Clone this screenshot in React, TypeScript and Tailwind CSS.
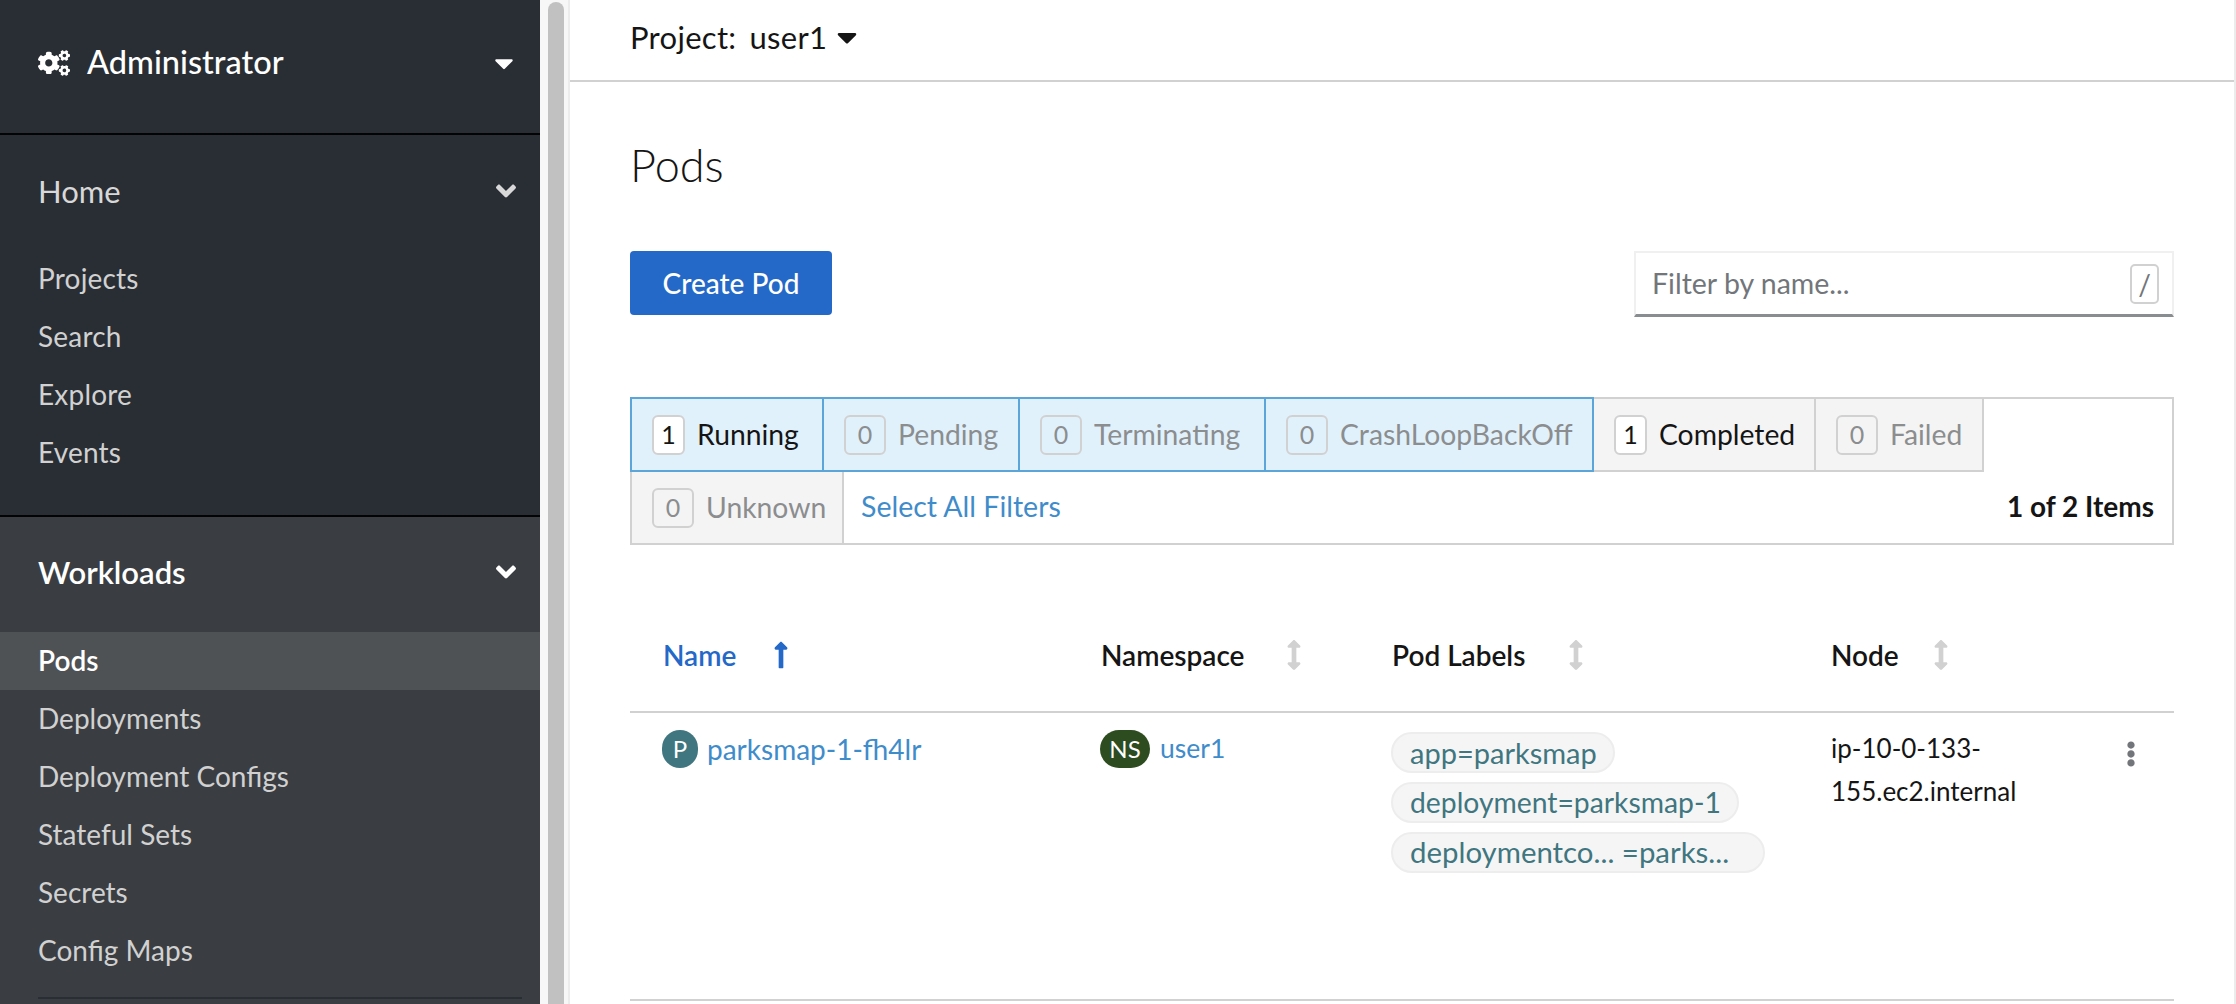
import { FaCogs, FaCaretDown, FaAngleDown, FaLongArrowAltUp, FaArrowsAltV, FaEllipsisV } from "react-icons/fa";

const homeLinks = ["Projects", "Search", "Explore", "Events"];
const workloadLinks = ["Pods", "Deployments", "Deployment Configs", "Stateful Sets", "Secrets", "Config Maps"];

function Filter({ count, label, width, active, on }: { count: number; label: string; width: string; active?: boolean; on?: boolean }) {
  return (
    <div className={`flex h-full items-center pl-[20px] ${width} ${active ? "bg-[#e0f1fb]" : "bg-[#f4f4f4]"}`}>
      <span
        className={`flex h-[40px] items-center justify-center rounded-[6px] border-2 border-[#d1d1d1] text-[25px] ${
          on ? "w-[33px] bg-white text-[#151515]" : "w-[42px] text-[#8b8d8f]"
        }`}
      >
        {count}
      </span>
      <span className={`ml-[12px] whitespace-nowrap text-[28.3px] ${on ? "text-[#151515]" : "text-[#8b8d8f]"}`}>{label}</span>
    </div>
  );
}

function Pill({ text, size }: { text: string; size: string }) {
  return (
    <span className={`flex h-[41px] w-fit items-center rounded-full border-2 border-[#ededed] bg-[#f5f5f5] pl-[17px] text-[#3f7680] ${size}`}>
      {text}
    </span>
  );
}

function App() {
  return (
    <div className="flex h-screen overflow-hidden bg-white font-['Lato',sans-serif]">
      <aside className="w-[540px] shrink-0 bg-[#3a3e42]">
        <div className="flex h-[135px] items-center border-b-2 border-[#030303] bg-[#292e34] pb-[8px] pl-[38px] pr-[21px] text-white">
          <FaCogs size={32} />
          <span className="ml-[17px] text-[32.5px] font-medium">Administrator</span>
          <FaCaretDown size={30} className="ml-auto" />
        </div>
        <div className="h-[382px] border-b-2 border-[#030303] bg-[#292e34]">
          <div className="flex h-[112px] items-center pl-[38px] pr-[18px] text-[31px] text-[#d8d8d8]">
            Home
            <FaAngleDown size={32} className="ml-auto" />
          </div>
          <div className="pt-[2px]">
            {homeLinks.map((item) => (
              <div key={item} className="flex h-[58px] items-center pl-[38px] text-[28px] tracking-[0.2px] text-[#d1d1d1]">
                {item}
              </div>
            ))}
          </div>
        </div>
        <div className="flex h-[112px] items-center pb-[2px] pl-[38px] pr-[18px] text-[31px] font-semibold text-white">
          Workloads
          <FaAngleDown size={32} className="ml-auto" />
        </div>
        <div className="pt-[3px]">
          {workloadLinks.map((item) => (
            <div
              key={item}
              className={`flex h-[58px] items-center pb-[2px] pl-[38px] text-[28px] ${
                item === "Pods" ? "bg-[#4f5255] font-semibold text-white" : "text-[#d1d1d1]"
              }`}
            >
              {item}
            </div>
          ))}
        </div>
        <div className="ml-[38px] mr-[18px] mt-[17px] h-[2px] bg-[#292e34]" />
      </aside>

      <div className="w-[30px] shrink-0 border-r-2 border-[#ececec] bg-[#f7f7f7] pl-[8px] pt-[2px]">
        <div className="h-[1100px] w-[16px] rounded-full bg-[#c1c1c1]" />
      </div>

      <main className="min-w-0 flex-1 border-r-2 border-[#ececec] text-[#151515]">
        <div className="flex h-[82px] items-center border-b-2 border-[#d1d1d1] pb-[6px] pl-[60px] text-[31px] tracking-[0.3px]">
          <span>Project:</span>
          <span className="ml-[13px]">user1</span>
          <FaCaretDown size={32} className="ml-[4px]" />
        </div>

        <div className="pl-[60px] pr-[60px]">
          <h1 className="flex h-[169px] items-center pb-[2px] text-[45px] font-light">Pods</h1>

          <div className="flex h-[65px] items-start justify-between">
            <button className="h-[64px] w-[202px] rounded-[4px] bg-[#2468c8] text-[28px] font-medium text-white">
              Create Pod
            </button>
            <div className="flex h-[66px] w-[540px] items-center border-2 border-b-[3px] border-[#f0f0f0] border-b-[#8a8d90] pl-[16px] pr-[13px]">
              <span className="text-[28.5px] text-[#72767b]">Filter by name...</span>
              <span className="ml-auto flex h-[40px] w-[29px] items-center justify-center rounded-[5px] border-2 border-[#d1d1d1] text-[28px] text-[#72767b]">
                /
              </span>
            </div>
          </div>

          <div className="mt-[81px] h-[148px] border-2 border-[#d1d1d1]">
            <div className="flex h-[72px]">
              <div className="-ml-[2px] -mt-[2px] flex h-[75px] border-2 border-[#5ba5d8]">
                <div className="border-r-2 border-[#5ba5d8]">
                  <Filter count={1} label="Running" width="w-[190px]" active on />
                </div>
                <div className="border-r-2 border-[#5ba5d8]">
                  <Filter count={0} label="Pending" width="w-[194px]" active />
                </div>
                <div className="border-r-2 border-[#5ba5d8]">
                  <Filter count={0} label="Terminating" width="w-[244px]" active />
                </div>
                <Filter count={0} label="CrashLoopBackOff" width="w-[326px]" active />
              </div>
              <div className="h-[73px] border-b-2 border-r-2 border-[#d1d1d1]">
                <Filter count={1} label="Completed" width="w-[220px]" on />
              </div>
              <div className="h-[73px] border-b-2 border-r-2 border-[#d1d1d1]">
                <Filter count={0} label="Failed" width="w-[166px]" />
              </div>
            </div>
            <div className="mt-[1px] flex h-[71px] items-center">
              <div className="h-full border-r-2 border-[#d1d1d1]">
                <Filter count={0} label="Unknown" width="w-[210px]" />
              </div>
              <span className="mb-[2px] ml-[17px] text-[28.5px] text-[#3f8ccb]">Select All Filters</span>
              <span className="mb-[4px] ml-auto mr-[18px] text-[28px] font-bold">1 of 2 Items</span>
            </div>
          </div>

          <div className="mt-[56px] grid h-[112px] grid-cols-[438px_291px_439px_1fr] items-center border-b-2 border-[#d1d1d1] pb-[2px] pl-[33px] text-[28px] font-semibold">
            <div className="flex items-center text-[#2468c8]">
              <span className="w-[103px]">Name</span>
              <FaLongArrowAltUp size={30} />
            </div>
            <div className="flex items-center">
              <span className="w-[178px]">Namespace</span>
              <FaArrowsAltV size={30} className="text-[#d1d1d1]" />
            </div>
            <div className="flex items-center">
              <span className="w-[169px]">Pod Labels</span>
              <FaArrowsAltV size={30} className="text-[#d1d1d1]" />
            </div>
            <div className="flex items-center">
              <span className="w-[95px]">Node</span>
              <FaArrowsAltV size={30} className="text-[#d1d1d1]" />
            </div>
          </div>

          <div className="grid h-[288px] grid-cols-[438px_291px_439px_1fr] border-b-2 border-[#d1d1d1] pl-[32px] pt-[17px]">
            <div className="flex h-[38px] items-center">
              <span className="flex h-[38px] w-[36px] items-center justify-center rounded-full bg-[#3f7680] text-[24px] text-white">
                P
              </span>
              <span className="ml-[9px] text-[28px] text-[#3f8ccb]">parksmap-1-fh4lr</span>
            </div>
            <div className="flex h-[38px] items-center">
              <span className="flex h-[38px] w-[50px] items-center justify-center rounded-full bg-[#2d4c1f] text-[24px] text-white">
                NS
              </span>
              <span className="ml-[10px] text-[26.5px] text-[#3f8ccb]">user1</span>
            </div>
            <div className="flex flex-col gap-[9px] pt-[2px]">
              <Pill text="app=parksmap" size="pr-[16px] text-[29px]" />
              <Pill text="deployment=parksmap-1" size="pr-[16px] text-[28.3px]" />
              <Pill text="deploymentco... =parks..." size="pr-[34px] text-[29.4px]" />
            </div>
            <div className="flex">
              <div className="-mt-[3px] w-[288px] pl-[1px] text-[26px] leading-[43px]">
                ip-10-0-133-
                <br />
                155.ec2.internal
              </div>
              <FaEllipsisV size={26} className="mt-[11px] text-[#72767b]" />
            </div>
          </div>
        </div>
      </main>
    </div>
  );
}

export default App;
